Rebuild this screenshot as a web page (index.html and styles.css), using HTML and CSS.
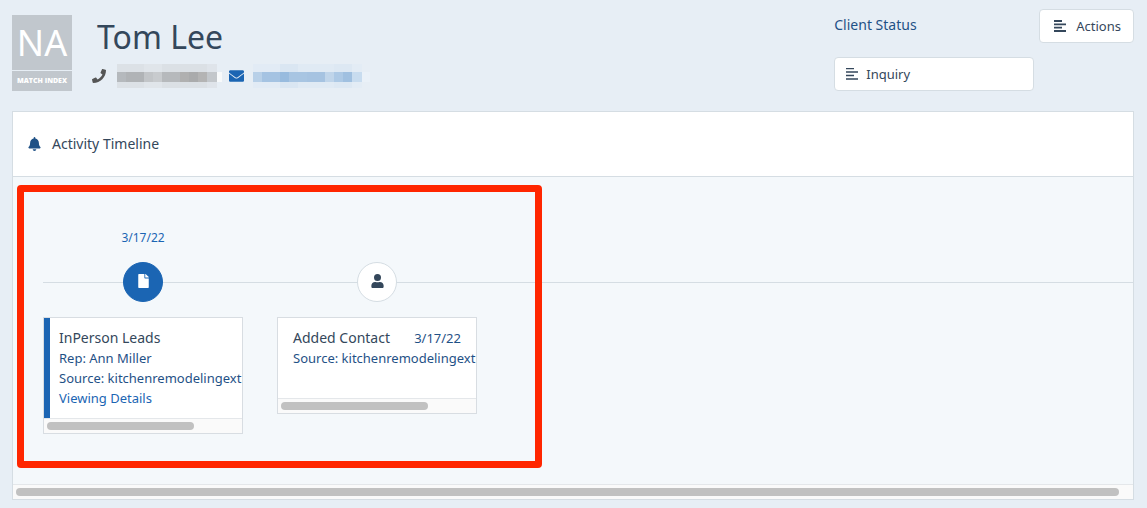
FILE: index.html
```html
<!DOCTYPE html>
<html lang="en">
<head>
    <meta charset="UTF-8">
    <meta name="viewport" content="width=device-width, initial-scale=1.0">
    <title>Tom Lee</title>
    <link rel="stylesheet" href="styles.css">
</head>
<body>
    <header class="contact-header">
        <div class="match-index">
            <div class="match-score">NA</div>
            <div class="match-label">MATCH INDEX</div>
        </div>

        <div class="contact-info">
            <h1>Tom Lee</h1>
            <div class="contact-links">
                <svg class="phone-icon" viewBox="0 0 512 512"><path d="M493 25l-104-24c-11-3-23 3-27 14l-48 112c-4 10-1 21 7 28l61 50c-36 76-98 140-177 177l-50-61c-7-8-18-11-28-7L15 362c-11 4-17 16-14 27l24 104c3 11 12 19 24 19 256 0 463-207 463-463 0-12-8-21-19-24z"/></svg>
                <span class="redacted phone"></span>
                <svg class="mail-icon" viewBox="0 0 512 400"><path d="M502 127c4-3 10 0 10 5v220c0 27-21 48-48 48H48c-27 0-48-21-48-48V132c0-5 6-8 10-5 22 17 52 40 155 114 21 15 57 48 91 48s71-33 91-48c103-74 133-97 155-114zM256 256c23 0 57-29 74-41 133-97 143-105 174-129 5-5 8-12 8-19V48c0-27-21-48-48-48H48C21 0 0 21 0 48v19c0 7 3 14 8 19 31 24 41 32 174 129 17 12 51 41 74 41z"/></svg>
                <span class="redacted email"></span>
            </div>
        </div>

        <div class="client-status">
            <label for="status-button">Client Status</label>
            <button id="status-button" class="status-button">
                <svg class="lines-icon" viewBox="0 0 12 12"><path d="M0 .7h8M0 4h12M0 7.5h8M0 11h12"/></svg>
                Inquiry
            </button>
        </div>

        <button class="actions-button">
            <svg class="lines-icon bold" viewBox="0 0 12 12"><path d="M0 1h8M0 4.3h12M0 7.6h8M0 11h12"/></svg>
            Actions
        </button>
    </header>

    <main class="panel">
        <div class="panel-title">
            <svg class="bell-icon" viewBox="0 0 448 512"><path d="M224 512c35 0 64-29 64-64H160c0 35 29 64 64 64zm215-150c-19-20-55-51-55-154 0-77-54-139-128-154V32c0-18-14-32-32-32s-32 14-32 32v22C118 69 64 131 64 208c0 103-36 134-55 154-6 6-9 14-9 22 0 16 13 32 32 32h384c19 0 32-16 32-32 0-8-3-16-9-22z"/></svg>
            <h2>Activity Timeline</h2>
        </div>

        <div class="timeline">
            <div class="timeline-item">
                <div class="timeline-date">3/17/22</div>
                <div class="marker active">
                    <svg class="file-icon" viewBox="0 0 384 512"><path d="M224 136V0H24C11 0 0 11 0 24v464c0 13 11 24 24 24h336c13 0 24-11 24-24V160H248c-13 0-24-11-24-24zm160-14v6H256V0h6c6 0 13 3 17 7l98 98c4 4 7 11 7 17z"/></svg>
                </div>
                <div class="card active">
                    <div class="card-body">
                        <h3>InPerson Leads</h3>
                        <p>Rep: Ann Miller</p>
                        <p>Source: kitchenremodelingextr</p>
                        <a href="#">Viewing Details</a>
                    </div>
                    <div class="scroll-track"><div class="scroll-thumb"></div></div>
                </div>
            </div>

            <div class="timeline-item">
                <div class="timeline-date"></div>
                <div class="marker">
                    <svg class="user-icon" viewBox="0 0 448 512"><path d="M224 256a128 128 0 1 0 0-256 128 128 0 0 0 0 256zm90 32h-17a174 174 0 0 1-146 0h-17C60 288 0 348 0 422v42c0 27 21 48 48 48h352c27 0 48-21 48-48v-42c0-74-60-134-134-134z"/></svg>
                </div>
                <div class="card">
                    <div class="card-body">
                        <div class="card-heading">
                            <h3>Added Contact</h3>
                            <span>3/17/22</span>
                        </div>
                        <p>Source: kitchenremodelingextr</p>
                    </div>
                    <div class="scroll-track"><div class="scroll-thumb"></div></div>
                </div>
            </div>

            <div class="highlight"></div>
        </div>
        <div class="scroll-track"><div class="scroll-thumb wide"></div></div>
    </main>
</body>
</html>
```
FILE: styles.css
```css
* {
    box-sizing: border-box;
}

body {
    font-family: "Noto Sans", sans-serif;
    font-size: 13px;
    line-height: 20px;
    color: #34475b;
    background-color: #e7eef5;
    margin: 0;
    padding: 9px 13px 9px 12px;
}

h1, h2, h3, p {
    margin: 0;
    font-weight: normal;
}

svg {
    display: block;
    fill: currentColor;
    flex-shrink: 0;
}

button {
    display: flex;
    align-items: center;
    height: 34px;
    font: inherit;
    color: #34475b;
    background-color: white;
    border: 1px solid #d5dde3;
    border-radius: 4px;
    cursor: pointer;
}

/* Header */
.contact-header {
    display: flex;
    align-items: flex-start;
    margin-bottom: 20px;
}

.match-index {
    width: 60px;
    margin-top: 6px;
    color: white;
    text-align: center;
}

.match-score {
    height: 55px;
    font-size: 36px;
    line-height: 55px;
    background-color: #c1c7cd;
}

.match-label {
    height: 20px;
    margin-top: 1px;
    font-family: "Open Sans", sans-serif;
    font-size: 7px;
    font-weight: 800;
    white-space: nowrap;
    background-color: #c1c7cd;
}

.contact-info {
    flex: 1;
    padding-left: 20px;
}

.contact-info h1 {
    padding-left: 5px;
    font-size: 32px;
    line-height: 55px;
}

.contact-links {
    display: flex;
    align-items: center;
    height: 24px;
}

.phone-icon {
    width: 14px;
    height: 14px;
    margin-right: 11px;
    color: #555;
}

.mail-icon {
    width: 15px;
    height: 12px;
    margin: 0 9px 0 7px;
    color: #1b65b3;
}

/* Masked contact details */
.redacted {
    height: 24px;
    background-repeat: no-repeat;
    background-size: 100% 10px, 100% 24px;
    background-position: 0 8px, 0 0;
}

.redacted.phone {
    width: 105px;
    background-image:
        linear-gradient(to right, #b5b9bd 0 9px, #b0b3b6 9px 27px, #c2c5c8 27px 36px, #c8cbce 36px 45px, #b6b9bc 45px 63px, #b0b0b0 63px 72px, #aaabac 72px 81px, #b4b4b4 81px 90px, #c3c7cb 90px 100px, #f8fafb 100px),
        linear-gradient(to right, #dce1e6 0 27px, #e0e5ea 27px 45px, #dbe0e5 45px 90px, #dfe4ea 90px 100px, transparent 100px);
}

.redacted.email {
    width: 117px;
    background-image:
        linear-gradient(to right, #b8d0e8 0 9px, #a5c3e2 9px 27px, #98bbde 27px 36px, #a8c5e2 36px 54px, #a6c3e1 54px 72px, #c0d5ea 72px 81px, #adc9e5 81px 90px, #a0c0e0 90px 99px, #c8dcef 99px 109px, #eaf1f8 109px),
        linear-gradient(to right, #e2ebf5 0 27px, #dae6f2 27px 45px, #e0eaf4 45px 81px, #dde8f3 81px 99px, #e3ecf5 99px 109px, transparent 109px);
}

.client-status {
    display: flex;
    flex-direction: column;
    width: 200px;
    margin-right: 5px;
    padding-top: 6px;
}

.client-status label {
    margin-bottom: 22px;
    font-size: 14px;
    color: #1f5186;
}

.status-button {
    gap: 8px;
    padding: 0 11px;
}

.actions-button {
    gap: 10px;
    padding: 0 12px 0 14px;
}

.lines-icon {
    width: 12px;
    height: 12px;
    fill: none;
    stroke: currentColor;
    stroke-width: 1.3;
}

.lines-icon.bold {
    stroke-width: 1.8;
}

/* Panel */
.panel {
    background-color: white;
    border: 1px solid #d5dde3;
}

.panel-title {
    display: flex;
    align-items: center;
    gap: 11px;
    height: 65px;
    padding: 0 15px;
    border-bottom: 1px solid #d5dde3;
}

.panel-title h2 {
    font-size: 14px;
}

.bell-icon {
    width: 13px;
    height: 14px;
    color: #1f5186;
}

/* Timeline */
.timeline {
    position: relative;
    display: flex;
    align-items: flex-start;
    gap: 34px;
    padding: 51px 30px 50px;
    background-color: #f4f8fb;
}

.timeline::before {
    content: "";
    position: absolute;
    top: 105px;
    left: 30px;
    right: 0;
    border-top: 1px solid #d5dde3;
}

.timeline-item {
    position: relative;
    width: 200px;
}

.timeline-date {
    height: 20px;
    font-size: 12px;
    text-align: center;
    color: #1b65b3;
}

.marker {
    display: flex;
    align-items: center;
    justify-content: center;
    width: 40px;
    height: 40px;
    margin: 14px auto 15px;
    padding-bottom: 2px;
    background-color: white;
    border: 1px solid #d5dde3;
    border-radius: 50%;
}

.marker.active {
    color: white;
    background-color: #1b65b3;
    border-color: #1b65b3;
}

.file-icon {
    width: 11px;
    height: 14px;
}

.user-icon {
    width: 13px;
    height: 14px;
}

.card {
    background-color: white;
    border: 1px solid #d8dde2;
    overflow: hidden;
}

.card-body {
    min-height: 80px;
    padding: 10px 15px;
    color: #1f5186;
    white-space: nowrap;
}

.card.active .card-body {
    padding-left: 9px;
    border-left: 6px solid #1b65b3;
}

.card-heading {
    display: flex;
    justify-content: space-between;
}

.card h3 {
    font-size: 14px;
    line-height: 20px;
    color: #34475b;
}

.card a {
    color: #1b65b3;
    text-decoration: none;
}

.scroll-track {
    height: 15px;
    padding: 3px;
    background-color: #fafafa;
    border-top: 1px solid #e4e7ea;
}

.scroll-thumb {
    width: 147px;
    height: 8px;
    background-color: #c1c1c1;
    border-radius: 4px;
}

.scroll-thumb.wide {
    width: 99%;
}

/* Red callout around the first entries */
.highlight {
    position: absolute;
    top: 8px;
    left: 4px;
    width: 525px;
    height: 283px;
    border: 7px solid #ff2600;
    border-radius: 4px;
    pointer-events: none;
}
```
